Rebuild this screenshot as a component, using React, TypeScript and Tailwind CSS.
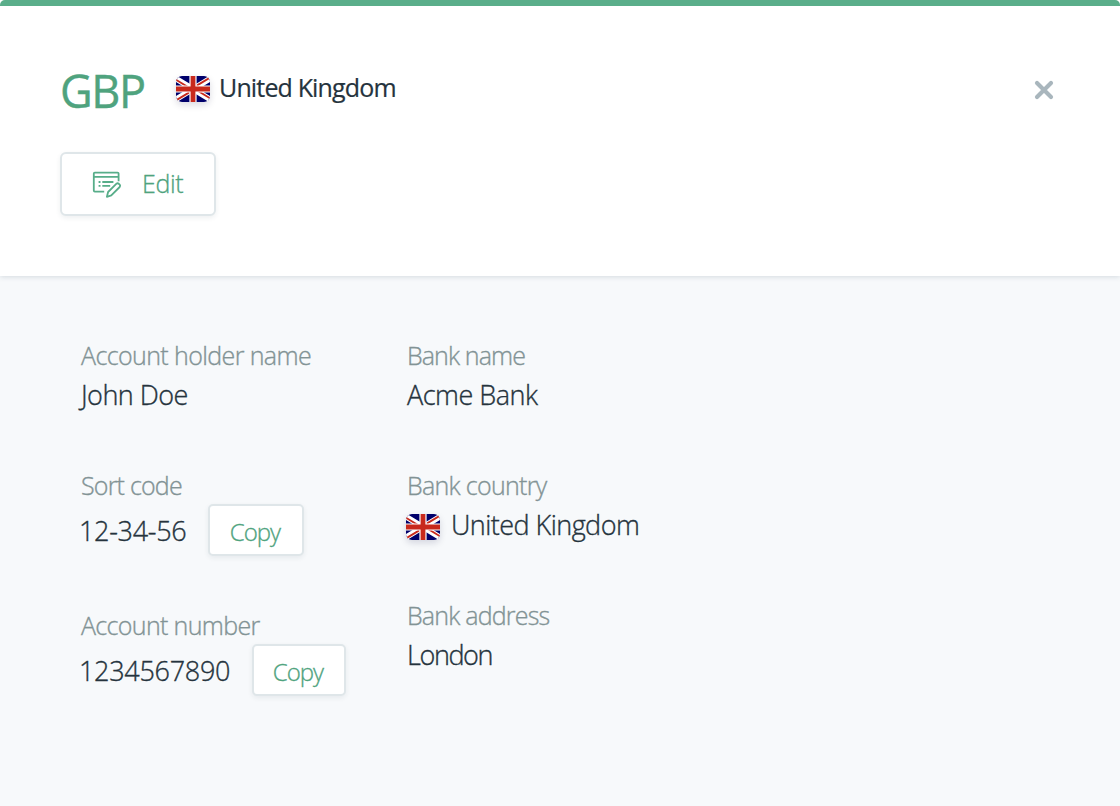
import { ReactNode } from "react";

function Flag({ className = "" }: { className?: string }) {
  return (
    <svg
      width="34"
      height="26"
      viewBox="0 0 34 26"
      className={`block shrink-0 rounded-[6px] shadow-[0_3px_7px_rgba(0,0,60,0.14)] ${className}`}
    >
      <rect width="34" height="26" fill="#00006b" />
      <path d="M-6 -1L40 27M40 -1L-6 27" stroke="#fff" strokeWidth="5.6" />
      <path d="M-6 0.1L17 14.1M40 25.9L17 11.9M40 -2.1L17 11.9M-6 28.1L17 14.1" stroke="#c8291c" strokeWidth="1.9" />
      <path d="M17 0V26M0 13H34" stroke="#fff" strokeWidth="7.2" />
      <path d="M17 0V26M0 13H34" stroke="#c8291c" strokeWidth="4.8" />
    </svg>
  );
}

function EditIcon() {
  return (
    <svg width="30" height="28" viewBox="0 0 30 28" fill="none" stroke="#57ad89" strokeWidth="1.8" strokeLinejoin="round">
      <path d="M12.2 21.6H2.8Q1.8 21.6 1.8 20.6V3.6Q1.8 2.6 2.8 2.6H25.6Q26.6 2.6 26.6 3.6V11.2" />
      <path d="M1.8 6.8H26.6" />
      <path d="M6.6 12H8.5M10.3 12H21.4M6.6 15.9H8.5M10.3 15.9H18.2" />
      <path d="M14.9 26.8L16.1 22L24.5 13.7Q25.6 12.8 26.8 13.8L27.7 14.7Q28.7 15.9 27.7 17L19.3 25.4Z" />
    </svg>
  );
}

interface FieldProps {
  label: string;
  labelClass: string;
  className: string;
  children: ReactNode;
}

function Field({ label, labelClass, className, children }: FieldProps) {
  return (
    <div className={className}>
      <div className={`h-[35px] pt-px pl-px text-[25px] leading-[30px] text-[#829395] ${labelClass}`}>{label}</div>
      {children}
    </div>
  );
}

function CopyButton({ className }: { className: string }) {
  return (
    <button
      className={`flex h-[52px] items-center justify-center rounded-[5px] border-2 border-[#dfe6e9] bg-white pt-[3px] pr-[2px] text-[24px] leading-[30px] tracking-[-1px] text-[#4fa37e] shadow-[0_2px_5px_rgba(40,70,80,0.08)] [-webkit-text-stroke:0.3px] ${className}`}
    >
      Copy
    </button>
  );
}

export default function App() {
  return (
    <div className="flex h-[806px] w-[1120px] flex-col overflow-hidden rounded-t-[5px] bg-[#f7f9fb] font-['Open_Sans',sans-serif] font-light text-[#25333d]">
      <header className="z-10 flex h-[276px] shrink-0 flex-col border-t-[6px] border-[#5aae8a] bg-white pl-[60px] shadow-[0_1px_5px_rgba(40,60,80,0.16)]">
        <div className="flex h-[146px] pt-[56px]">
          <div className="w-[115px] pt-px text-[45px] leading-[56px] font-normal tracking-[-1.4px] text-[#4fa37e] [-webkit-text-stroke:0.4px]">GBP</div>
          <div className="flex h-[54px] flex-1 items-center gap-[9px] pl-px text-[25px] font-normal">
            <Flag />
            <span className="pb-[4px] leading-[30px] tracking-[-0.85px] [-webkit-text-stroke:0.2px]">United Kingdom</span>
          </div>
          <button className="mt-[18px] mr-[66px] h-5 w-5" aria-label="Close">
            <svg width="20" height="20" viewBox="0 0 20 20" stroke="#a9b6bd" strokeWidth="4.2" strokeLinecap="round">
              <path d="M3 3L17 17M17 3L3 17" />
            </svg>
          </button>
        </div>
        <button className="flex h-[64px] w-[156px] items-center rounded-[6px] border-2 border-[#dfe6e9] bg-white pl-[30px] text-[25px] leading-[30px] tracking-[-0.4px] text-[#4fa37e] shadow-[0_2px_5px_rgba(40,70,80,0.08)] [-webkit-text-stroke:0.3px]">
          <EditIcon />
          <span className="ml-5 pb-[2px]">Edit</span>
        </button>
      </header>
      <main className="flex pt-[63px] pl-[80px] text-[27px] leading-[42px] whitespace-nowrap [-webkit-text-stroke:0.35px]">
        <div className="w-[326px]">
          <Field label="Account holder name" labelClass="tracking-[-0.6px]" className="h-[130px]">
            <div className="pl-px tracking-[-0.55px]">John Doe</div>
          </Field>
          <Field label="Sort code" labelClass="tracking-[-0.8px]" className="h-[140px]">
            <div className="flex items-center">
              <span className="-ml-px w-[129px] pt-px tracking-[-0.3px]">12-34-56</span>
              <CopyButton className="w-[96px]" />
            </div>
          </Field>
          <Field label="Account number" labelClass="tracking-[-0.65px]" className="h-[130px]">
            <div className="flex items-center">
              <span className="-ml-px w-[173px] pt-px tracking-[-0.3px]">1234567890</span>
              <CopyButton className="w-[94px]" />
            </div>
          </Field>
        </div>
        <div>
          <Field label="Bank name" labelClass="tracking-[-0.9px]" className="h-[130px]">
            <div className="pl-px tracking-[-0.5px]">Acme Bank</div>
          </Field>
          <Field label="Bank country" labelClass="tracking-[-0.7px]" className="h-[130px]">
            <div className="flex items-center gap-[11px]">
              <Flag className="mt-1" />
              <span className="tracking-[-0.55px]">United Kingdom</span>
            </div>
          </Field>
          <Field label="Bank address" labelClass="tracking-[-0.8px]" className="h-[130px]">
            <div className="pl-px tracking-[-1.4px]">London</div>
          </Field>
        </div>
      </main>
    </div>
  );
}
